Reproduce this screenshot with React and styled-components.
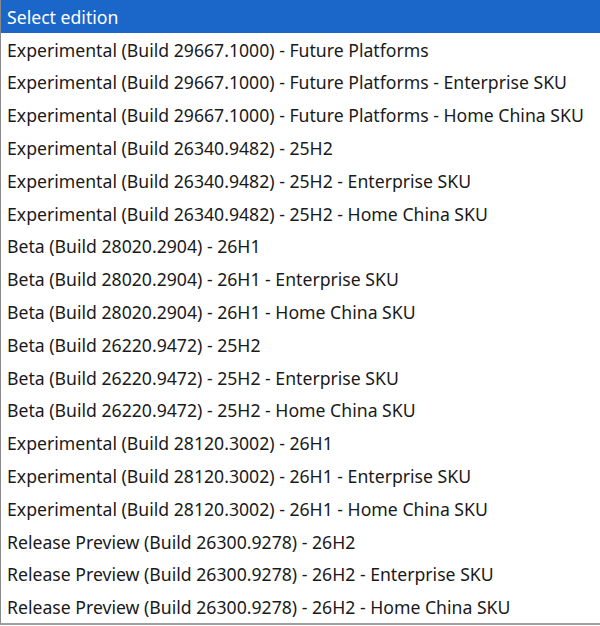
import React from "react";
import styled, { createGlobalStyle } from "styled-components";

const Global = createGlobalStyle`
  html, body {
    margin: 0;
    padding: 0;
    background: #ffffff;
  }
`;

const List = styled.ul`
  list-style: none;
  margin: 0;
  padding: 0;
  width: 600px;
  box-sizing: border-box;
  border-left: 1px solid #8a8a8a;
  border-bottom: 2px solid #a0a0a0;
  background: #ffffff;
  font-family: "Noto Sans", "Open Sans", sans-serif;
`;

const Option = styled.li`
  height: 32.8px;
  display: flex;
  align-items: center;
  padding-left: 6px;
  padding-top: 1px;
  box-sizing: border-box;
  font-size: 17.65px;
  white-space: nowrap;
  color: ${(p) => (p.$selected ? "#ffffff" : "#1a1a1a")};
  background: ${(p) => (p.$selected ? "#1a66c9" : "transparent")};
`;

const editions = [
  "Select edition",
  "Experimental (Build 29667.1000) - Future Platforms",
  "Experimental (Build 29667.1000) - Future Platforms - Enterprise SKU",
  "Experimental (Build 29667.1000) - Future Platforms - Home China SKU",
  "Experimental (Build 26340.9482) - 25H2",
  "Experimental (Build 26340.9482) - 25H2 - Enterprise SKU",
  "Experimental (Build 26340.9482) - 25H2 - Home China SKU",
  "Beta (Build 28020.2904) - 26H1",
  "Beta (Build 28020.2904) - 26H1 - Enterprise SKU",
  "Beta (Build 28020.2904) - 26H1 - Home China SKU",
  "Beta (Build 26220.9472) - 25H2",
  "Beta (Build 26220.9472) - 25H2 - Enterprise SKU",
  "Beta (Build 26220.9472) - 25H2 - Home China SKU",
  "Experimental (Build 28120.3002) - 26H1",
  "Experimental (Build 28120.3002) - 26H1 - Enterprise SKU",
  "Experimental (Build 28120.3002) - 26H1 - Home China SKU",
  "Release Preview (Build 26300.9278) - 26H2",
  "Release Preview (Build 26300.9278) - 26H2 - Enterprise SKU",
  "Release Preview (Build 26300.9278) - 26H2 - Home China SKU",
];

export default function App() {
  return (
    <>
      <Global />
      <List>
        {editions.map((e, i) => (
          <Option key={i} $selected={i === 0}>
            {e}
          </Option>
        ))}
      </List>
    </>
  );
}
